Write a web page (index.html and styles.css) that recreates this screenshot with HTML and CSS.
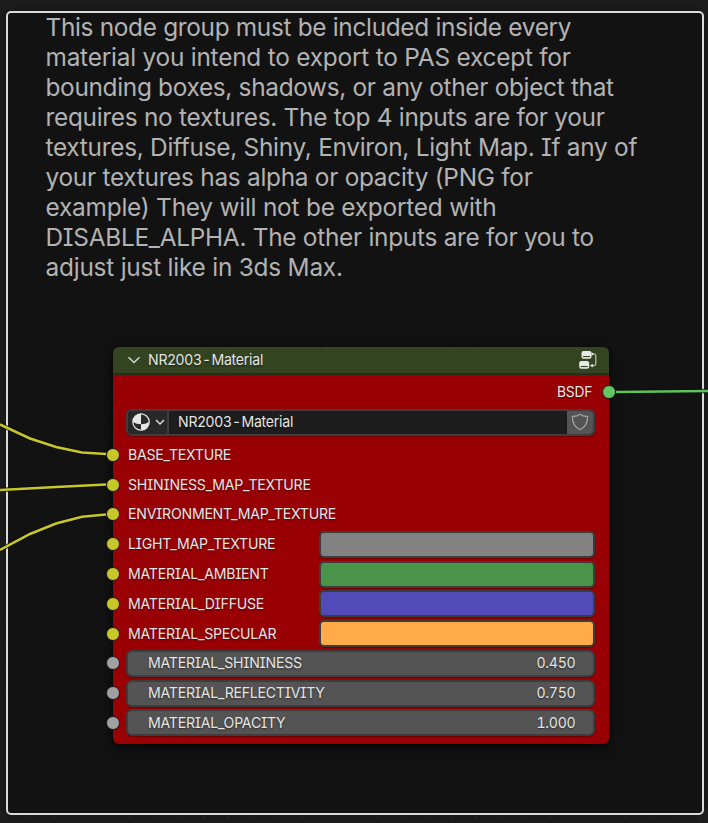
FILE: index.html
```html
<!DOCTYPE html>
<html lang="en">
<head>
<meta charset="utf-8">
<title>NR2003-Material</title>
<link rel="stylesheet" href="styles.css">
</head>
<body>
<main class="frame">
  <div class="note">
    <div>This node group must be included inside every</div>
    <div class="wide">material you intend to export to PAS except for</div>
    <div>bounding boxes, shadows, or any other object that</div>
    <div class="loose">requires no textures. The top 4 inputs are for your</div>
    <div class="loose">textures, Diffuse, Shiny, Environ, Light Map. If any of</div>
    <div class="loose">your textures has alpha or opacity (PNG for</div>
    <div class="wide">example) They will not be exported with</div>
    <div class="loose">DISABLE_ALPHA. The other inputs are for you to</div>
    <div class="wide">adjust just like in 3ds Max.</div>
  </div>
  <section class="node">
    <header class="head">
      <svg class="chev" width="14" height="8" viewBox="0 0 14 8"><path d="M1.5 1.2 7 6.5l5.500-5.300" fill="none" stroke="#dcdfd8" stroke-width="1.300"/></svg>
      <span class="title label">NR2003<i>-</i>Material</span>
      <svg class="group" width="20" height="20" viewBox="0 0 20 20">
        <rect x="3.500" y="1" width="10" height="7.800" rx="2" fill="#e8e8e8"/><rect x="5" y="6" width="7" height="1.100" fill="#344424"/>
        <rect x="1.200" y="11" width="10" height="7.800" rx="2" fill="#e8e8e8"/><rect x="2.700" y="16" width="7" height="1.100" fill="#344424"/>
        <path d="M14.500 4h1.500q1.800 0 1.800 1.800v8q0 1.800-1.800 1.800h-3" fill="none" stroke="#bfc4ba" stroke-width="1.200"/>
        <path d="M13.500 2.200l2.800 1.800-2.800 1.800zM14.800 13.800l-2.800 1.800 2.800 1.800z" fill="#e8e8e8"/>
      </svg>
    </header>
    <div class="rows">
      <div class="row out"><span class="label">BSDF</span><b class="socket green"></b></div>
      <div class="row data"><div class="picker">
        <span class="kind">
          <svg width="20" height="20" viewBox="0 0 20 20"><circle cx="10" cy="10" r="8.200" fill="#2a2a2a" stroke="#e6e6e6" stroke-width="1.200"/><path d="M10 12.200V1.800A8.200 8.200 0 0 0 1.800 10q4 2.200 8.200 2.200zM10 12.200V18.200A8.200 8.200 0 0 0 18.200 10q-4 2.200-8.200 2.200z" fill="#e6e6e6"/></svg>
          <svg width="10" height="7" viewBox="0 0 10 7"><path d="M1 1l4 4 4-4" fill="none" stroke="#dedede" stroke-width="1.500"/></svg>
        </span>
        <span class="name"><span class="label">NR2003<i>-</i>Material</span></span>
        <span class="fake"><svg width="18" height="18" viewBox="0 0 18 18"><path d="M9 1.200Q12.500 3.700 16.500 3.300Q17.200 12.500 9 16.700Q.8 12.500 1.500 3.300Q5.500 3.700 9 1.200z" fill="none" stroke="#a2a2a2" stroke-width="1.200"/></svg></span>
      </div></div>
      <div class="row"><b class="socket"></b><span class="label">BASE_TEXTURE</span></div>
      <div class="row"><b class="socket"></b><span class="label">SHININESS_MAP_TEXTURE</span></div>
      <div class="row"><b class="socket"></b><span class="label">ENVIRONMENT_MAP_TEXTURE</span></div>
      <div class="row"><b class="socket"></b><span class="label">LIGHT_MAP_TEXTURE</span><em class="swatch gray"></em></div>
      <div class="row"><b class="socket"></b><span class="label">MATERIAL_AMBIENT</span><em class="swatch leaf"></em></div>
      <div class="row"><b class="socket"></b><span class="label">MATERIAL_DIFFUSE</span><em class="swatch violet"></em></div>
      <div class="row"><b class="socket"></b><span class="label">MATERIAL_SPECULAR</span><em class="swatch orange"></em></div>
      <div class="row"><b class="socket value"></b><div class="field"><span class="label">MATERIAL_SHININESS</span><span class="label num">0.450</span></div></div>
      <div class="row"><b class="socket value"></b><div class="field"><span class="label">MATERIAL_REFLECTIVITY</span><span class="label num">0.750</span></div></div>
      <div class="row"><b class="socket value"></b><div class="field"><span class="label">MATERIAL_OPACITY</span><span class="label num">1.000</span></div></div>
    </div>
  </section>
</main>
<svg class="wires" width="708" height="823" viewBox="0 0 708 823">
  <g class="under"><path d="M0 424.500 30 438.500 56 447 82 452.500 106 454"/><path d="M0 490 56 487 106 484.500"/><path d="M0 550 30 534 56 523.500 82 516.700 106 514.500"/><path d="M616 392 708 391"/></g>
  <g class="over"><path d="M0 424.500 30 438.500 56 447 82 452.500 106 454"/><path d="M0 490 56 487 106 484.500"/><path d="M0 550 30 534 56 523.500 82 516.700 106 514.500"/><path class="shader" d="M616 392 708 391"/></g>
</svg>
</body>
</html>
```
FILE: styles.css
```css
* { box-sizing: border-box; }
body {
  margin: 0;
  height: 823px;
  overflow: hidden;
  padding: 11px 4px 8px 6px;
  background: radial-gradient(circle, #252525 1px, transparent 1.6px) -7.400px 804.500px / 24.800px 24.800px, #1d1d1d;
  font: 15px/20px Inter, sans-serif;
  font-feature-settings: "cv08";
  color: #e6e6e6;
}
i { font-style: normal; margin: 0 2px; }
.frame {
  width: 698px;
  height: 804px;
  padding: 0 0 0 38px;
  border: 2px solid #dadada;
  border-radius: 5px;
  background: radial-gradient(circle, #171717 .8px, transparent 1.500px) -15.400px 791.500px / 24.800px 24.800px, #121212;
  box-shadow: 0 0 8px #0006;
}
.note {
  height: 335px;
  margin: -1px 0 0 -.500px;
  font-size: 24.400px;
  line-height: 30px;
  letter-spacing: -.32px;
  color: #b3b3b3;
  white-space: nowrap;
}
.note .loose { letter-spacing: -.28px; }
.note .wide { letter-spacing: -.22px; }
.node {
  width: 496px;
  height: 397px;
  margin-left: 67px;
  border-radius: 6px;
  background: #990003;
  box-shadow: 0 0 0 1px #0b0b0b66, 0 3px 12px #000b;
}
.head {
  height: 28px;
  display: flex;
  align-items: center;
  padding: 0 11px 1px 14px;
  background: #344421;
  border-bottom: 2px solid #2a2e18;
  border-radius: 6px 6px 0 0;
}
.title { margin-left: 7px; flex: 1; }
/* Interface labels are set slightly condensed */
.label {
  display: inline-block;
  transform: scaleX(.94);
  transform-origin: left;
  letter-spacing: -.25px;
  text-shadow: 0 1px 2px #0008;
}
.num { transform-origin: right; letter-spacing: -.300px; font-feature-settings: "cv08", "tnum"; }
.out .label { transform: scaleX(.92); transform-origin: right; }
.rows { padding-top: 2px; }
.row {
  height: 29.780px;
  display: flex;
  align-items: center;
  padding-right: 14px;
}
.data { height: 33.300px; padding-bottom: 2px; }
.socket {
  width: 14px;
  height: 14px;
  flex: none;
  margin: 0 8px 0 -7px;
  border: 1px solid #191919;
  border-radius: 50%;
  background: #c7c729;
}
.socket.green { margin: 0 -21px 0 10px; background: #63c763; }
.socket.value { background: #a1a1a1; margin-right: 6px; }
.out { justify-content: flex-end; }
.swatch {
  width: 276px;
  height: 27px;
  margin-left: auto;
  border: 2px solid #3d3d3d;
  border-radius: 5px;
  box-shadow: 0 1px 1px #0004;
}
.gray { background: #828282; }
.leaf { background: #4a944a; }
.violet { background: #524ab7; }
.orange { background: #ffab4a; }
.field {
  height: 27px;
  flex: 1;
  display: flex;
  align-items: center;
  justify-content: space-between;
  padding: 0 18px 0 20px;
  border: 2px solid #3d3d3d;
  border-radius: 6px;
  background: #545454;
  box-shadow: 0 1px 1px #0004;
}
.picker {
  width: 469px;
  height: 27px;
  margin-left: 13px;
  display: flex;
  border: 2px solid #3d3d3d;
  border-radius: 6px;
  background: #1d1d1d;
  box-shadow: 0 1px 1px #0004;
}
.kind {
  width: 41px;
  display: flex;
  align-items: center;
  gap: 4px;
  padding-left: 3px;
  background: #282828;
  border-right: 2px solid #3d3d3d;
  border-radius: 4px 0 0 4px;
}
.name { flex: 1; padding-left: 9px; line-height: 22px; }
.fake {
  width: 26px;
  display: flex;
  align-items: center;
  justify-content: center;
  background: #545454;
  border-radius: 0 4px 4px 0;
}
.wires { position: absolute; left: 0; top: 0; fill: none; pointer-events: none; }
.under { stroke: #0d0d0dcc; stroke-width: 4.500px; }
.over { stroke: #c7c729; stroke-width: 2.500px; }
.over .shader { stroke: #5cc45c; }
```
